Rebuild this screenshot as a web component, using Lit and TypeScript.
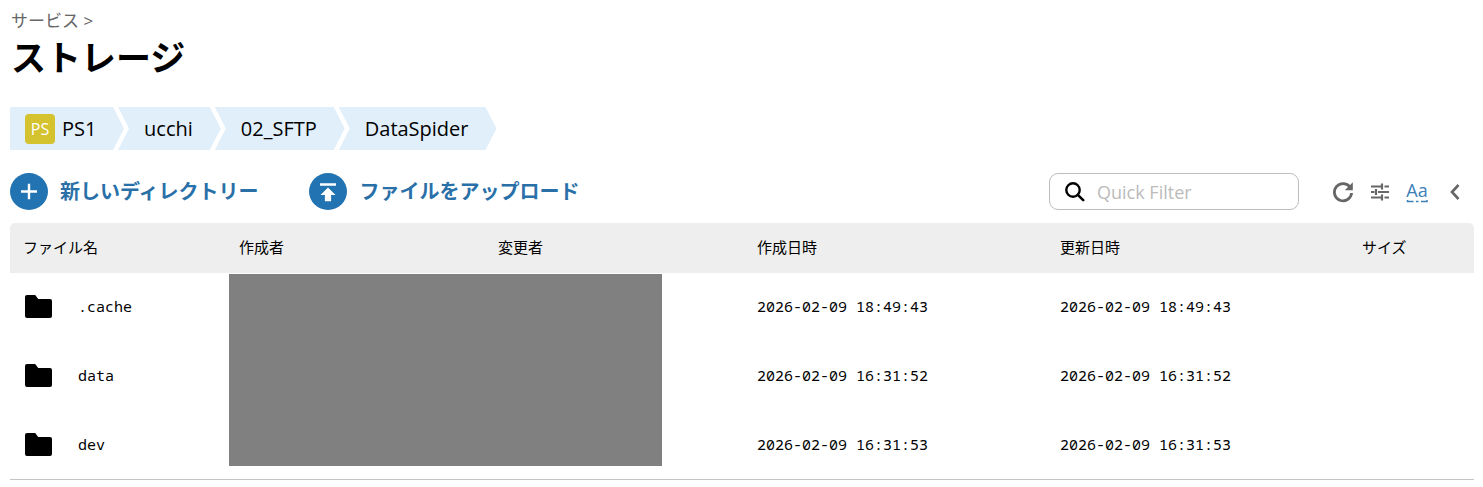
import { LitElement, html, css, svg } from "lit";
import { customElement } from "lit/decorators.js";

const rows = [
  { name: ".cache", created: "2026-02-09 18:49:43", updated: "2026-02-09 18:49:43" },
  { name: "data", created: "2026-02-09 16:31:52", updated: "2026-02-09 16:31:52" },
  { name: "dev", created: "2026-02-09 16:31:53", updated: "2026-02-09 16:31:53" },
];

const crumbs = ["PS1", "ucchi", "02_SFTP", "DataSpider"];

@customElement("app-root")
export class AppRoot extends LitElement {
  static styles = css`
    :host {
      display: block;
      width: 1483px;
      height: 487px;
      overflow: hidden;
      background: #fff;
      box-sizing: border-box;
      padding: 11px 9px 0 10px;
      font-family: "Open Sans", "Noto Sans CJK JP", sans-serif;
      color: #000;
    }
    .service { font-size: 17px; line-height: 20px; color: #666; margin-left: 1px; }
    h1 {
      margin: 5px 0 0 1px;
      font-size: 35px;
      line-height: 44px;
      font-weight: 700;
    }
    .crumbs { display: flex; margin-top: 27px; height: 43px; }
    .crumb {
      display: flex;
      align-items: center;
      height: 43px;
      background: #e1effa;
      font-size: 20px;
      padding: 0 28px 0 26px;
      margin-right: -6px;
      box-sizing: border-box;
      clip-path: polygon(0 0, calc(100% - 11px) 0, 100% 50%, calc(100% - 11px) 100%, 0 100%, 11px 50%);
    }
    .crumb.first {
      padding-left: 15px;
      padding-right: 27.6px;
      clip-path: polygon(0 0, calc(100% - 11px) 0, 100% 50%, calc(100% - 11px) 100%, 0 100%);
    }
    .badge {
      width: 30px;
      height: 30px;
      border-radius: 4px;
      background: #d4c22e;
      color: #fff;
      font-size: 16px;
      display: flex;
      align-items: center;
      justify-content: center;
      margin-right: 7px;
    }
    .toolbar { display: flex; align-items: center; margin-top: 23px; height: 37px; }
    .action {
      display: flex;
      align-items: center;
      gap: 12px;
      font-size: 20px;
      font-weight: 700;
      color: #2a70a8;
    }
    .action span { margin-top: -2px; }
    .action + .action { margin-left: 50px; gap: 13px; }
    .circle { display: block; width: 38px; height: 37px; flex: none; }
    .search {
      margin-left: auto;
      width: 250px;
      height: 37px;
      box-sizing: border-box;
      border: 1px solid #bdbdbd;
      border-radius: 9px;
      display: flex;
      align-items: center;
      padding-left: 14px;
      gap: 12px;
      color: #bbb;
      font-size: 18px;
    }
    .tools { display: flex; align-items: center; margin-left: 33px; margin-right: 13px; gap: 16px; }
    .tools svg { display: block; }
    .tools .back { margin-left: 5px; }
    .aa {
      display: flex;
      flex-direction: column;
      align-items: center;
      width: 22px;
      color: #3d7fb8;
      font-size: 18px;
      line-height: 17px;
      margin-top: 1px;
    }
    .table {
      position: relative;
      margin-top: 13px;
      width: 1464px;
      height: 257px;
      box-sizing: border-box;
      border-bottom: 1px solid #c4c4c4;
    }
    .row {
      display: grid;
      grid-template-columns: 219px 259px 259px 303px 302px 122px;
      height: 69px;
      align-items: center;
    }
    .row > div { padding-left: 10px; }
    .row > div:first-child { padding-left: 15px; display: flex; align-items: center; }
    .head {
      height: 50px;
      background: #eee;
      border-radius: 5px 5px 0 0;
      font-size: 15px;
    }
    .head > div { margin-top: -3px; }
    .head > div:first-child { padding-left: 13px; }
    .mono {
      font-family: "Noto Sans Mono", "DejaVu Sans Mono", monospace;
      font-size: 15px;
      height: 67px;
      padding-bottom: 2px;
    }
    .name { margin: -2px 0 0 26px; }
    .date { margin-top: -2px; }
    .folder { display: block; flex: none; }
    .redact {
      position: absolute;
      left: 219px;
      top: 51px;
      width: 433px;
      height: 192px;
      background: #808080;
    }
  `;

  private circlePlus() {
    return html`<svg class="circle" viewBox="0 0 38 38" preserveAspectRatio="none">
      <circle cx="19" cy="19" r="19" fill="#2273b1"></circle>
      <path d="M19 11v16M11 19h16" stroke="#fff" stroke-width="2.4" fill="none"></path>
    </svg>`;
  }

  private circleUpload() {
    return html`<svg class="circle" viewBox="0 0 38 38" preserveAspectRatio="none">
      <circle cx="19" cy="19" r="19" fill="#2273b1"></circle>
      <path d="M11 10.5h16v2.6H11zM19 15l7.5 7.5h-4.4V29h-6.2v-6.5h-4.4z" fill="#fff"></path>
    </svg>`;
  }

  private folder() {
    return html`<svg class="folder" width="27" height="23" viewBox="0 0 27 23">
      <path d="M2 0h8.2l3 4H25a2 2 0 0 1 2 2v15a2 2 0 0 1-2 2H2a2 2 0 0 1-2-2V2a2 2 0 0 1 2-2z" fill="#000"></path>
    </svg>`;
  }

  render() {
    return html`
      <div class="service">サービス &gt;</div>
      <h1>ストレージ</h1>
      <div class="crumbs">
        ${crumbs.map(
          (c, i) => html`<div class="crumb ${i === 0 ? "first" : ""}">
            ${i === 0 ? html`<span class="badge">PS</span>` : ""}${c}
          </div>`
        )}
      </div>
      <div class="toolbar">
        <div class="action">${this.circlePlus()}<span>新しいディレクトリー</span></div>
        <div class="action">${this.circleUpload()}<span>ファイルをアップロード</span></div>
        <div class="search">
          <svg width="21" height="21" viewBox="0 0 21 21">
            <circle cx="9" cy="9" r="6.7" fill="none" stroke="#000" stroke-width="2.4"></circle>
            <path d="M13.8 13.8l5.4 5.4" stroke="#000" stroke-width="2.6" fill="none" stroke-linecap="round"></path>
          </svg>
          Quick Filter
        </div>
        <div class="tools">
          <svg width="22" height="22" viewBox="0 0 22 22">
            <path d="M18 6.2A8.6 8.6 0 1 0 19.6 12" fill="none" stroke="#666" stroke-width="2.8"></path>
            <path d="M20.8 1.2v8h-8z" fill="#666"></path>
          </svg>
          <svg width="20" height="20" viewBox="0 0 20 20">
            ${svg`<path d="M1 4.5h10M14.5 4.5h4.5M1 10h3.5M8 10h11M1 15.5h10M14.5 15.5h4.5" stroke="#666" stroke-width="2" fill="none"></path>
            <path d="M12 1.5v6M6 7v6M12 12.5v6" stroke="#666" stroke-width="2.2" fill="none"></path>`}
          </svg>
          <div class="aa">
            <span>Aa</span>
            <svg width="22" height="4" viewBox="0 0 22 4">
              <path d="M1.5 1v1.5h6M10 2.5h2.5M15 2.5h6V1" stroke="#3d7fb8" stroke-width="1.5" fill="none"></path>
            </svg>
          </div>
          <svg class="back" width="12" height="18" viewBox="0 0 12 18">
            <path d="M9.5 2L3 9l6.5 7" stroke="#666" stroke-width="2.6" fill="none"></path>
          </svg>
        </div>
      </div>
      <div class="table">
        <div class="row head">
          <div>ファイル名</div><div>作成者</div><div>変更者</div><div>作成日時</div><div>更新日時</div><div>サイズ</div>
        </div>
        ${rows.map(
          (r) => html`<div class="row mono">
            <div>${this.folder()}<span class="name">${r.name}</span></div>
            <div></div><div></div>
            <div class="date">${r.created}</div><div class="date">${r.updated}</div><div></div>
          </div>`
        )}
        <div class="redact"></div>
      </div>
    `;
  }
}
